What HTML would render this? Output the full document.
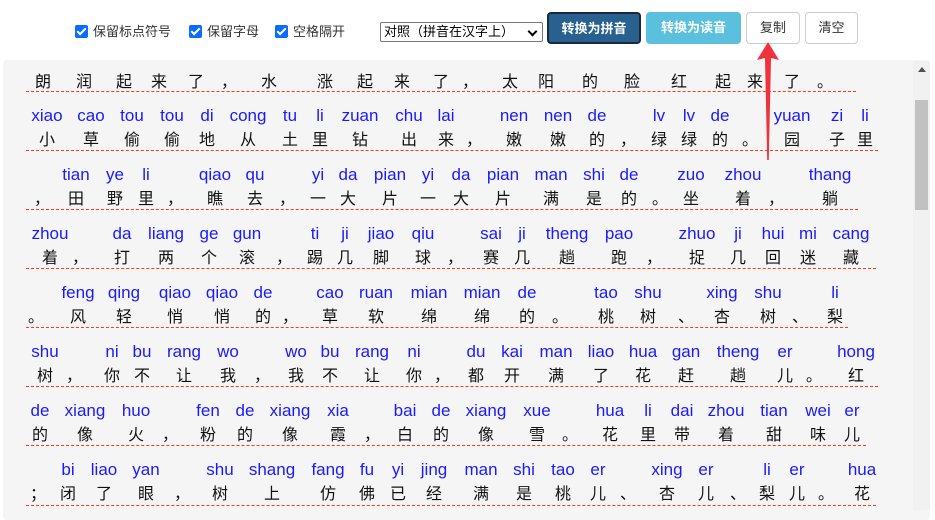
<!DOCTYPE html>
<html><head><meta charset="utf-8">
<style>
*{margin:0;padding:0;box-sizing:border-box}
body{width:935px;height:510px;overflow:hidden;background:#fff;font-family:"Liberation Sans","Noto Sans CJK SC",sans-serif;position:relative}
.cb{position:absolute;top:25px;width:13px;height:13px;background:#0a6cff;border-radius:2px}
.cb:after{content:"";position:absolute;left:4px;top:1px;width:3px;height:7px;border:solid #fff;border-width:0 2px 2px 0;transform:rotate(45deg)}
.lb{position:absolute;top:23px;font-size:13px;color:#333;line-height:18px}
.sel{position:absolute;left:380px;top:22px;width:163px;height:20px;border:1px solid #767676;border-radius:2px;font-size:13px;line-height:18px;padding-left:3px;color:#000;background:#fff}
.sel:after{content:"";position:absolute;right:6px;top:5px;width:5px;height:5px;border:solid #000;border-width:0 2px 2px 0;transform:rotate(45deg)}
.btn{position:absolute;top:12px;height:32px;border-radius:4px;font-size:13px;line-height:30px;text-align:center;border:1px solid #ccc;color:#333;background:#fff}
#box{position:absolute;left:3px;top:60px;width:927px;height:460px;background:#f5f5f5;border-radius:4px;overflow:hidden}
#sb{position:absolute;left:913px;top:61px;width:17px;height:449px;background:#f1f1f1}
#th{position:absolute;left:915px;top:100px;width:13px;height:110px;background:#c1c1c1}
#ar{position:absolute;left:918px;top:67px;width:0;height:0;border:4px solid transparent;border-bottom:5px solid #505050;border-top:0}
#c{position:absolute;left:0;top:2px;width:913px;height:508px;overflow:hidden}
.u{position:absolute;transform:translateX(-50%);text-align:center;white-space:nowrap}
.p{height:20px;line-height:20px;font-size:17px;color:#1a1aff}
.h{height:20px;line-height:20px;font-size:16px;color:#111;margin-top:5px}
.d{position:absolute;left:26px;height:0;border-top:1px dashed #ff3a10}
</style></head><body>
<div class="cb" style="left:75px"></div><div class="lb" style="left:93px">保留标点符号</div>
<div class="cb" style="left:189px"></div><div class="lb" style="left:207px">保留字母</div>
<div class="cb" style="left:275px"></div><div class="lb" style="left:293px">空格隔开</div>
<div class="sel">对照（拼音在汉字上）</div>
<div class="btn" style="left:547px;width:94px;background:#286090;color:#fff;border:2px solid #1b2a3a;font-weight:bold">转换为拼音</div>
<div class="btn" style="left:646px;width:95px;background:#5bc0de;color:#fff;border-color:#5bc0de;font-weight:bold">转换为读音</div>
<div class="btn" style="left:746px;width:54px">复制</div>
<div class="btn" style="left:805px;width:53px">清空</div>
<div id="box"></div>
<div id="sb"></div><div id="th"></div><div id="ar"></div>

<div id="c">
<div style="position:absolute;left:0;top:-2px;width:913px;height:510px">
<!-- line1 -->
<div class="u" style="left:43px;top:48px"><div class="p"></div><div class="h">朗</div></div>
<div class="u" style="left:84px;top:48px"><div class="p"></div><div class="h">润</div></div>
<div class="u" style="left:124px;top:48px"><div class="p"></div><div class="h">起</div></div>
<div class="u" style="left:159px;top:48px"><div class="p"></div><div class="h">来</div></div>
<div class="u" style="left:196px;top:48px"><div class="p"></div><div class="h">了</div></div>
<div class="u" style="left:229px;top:48px"><div class="p"></div><div class="h">，</div></div>
<div class="u" style="left:269px;top:48px"><div class="p"></div><div class="h">水</div></div>
<div class="u" style="left:325px;top:48px"><div class="p"></div><div class="h">涨</div></div>
<div class="u" style="left:365px;top:48px"><div class="p"></div><div class="h">起</div></div>
<div class="u" style="left:402px;top:48px"><div class="p"></div><div class="h">来</div></div>
<div class="u" style="left:441px;top:48px"><div class="p"></div><div class="h">了</div></div>
<div class="u" style="left:470px;top:48px"><div class="p"></div><div class="h">，</div></div>
<div class="u" style="left:510px;top:48px"><div class="p"></div><div class="h">太</div></div>
<div class="u" style="left:546px;top:48px"><div class="p"></div><div class="h">阳</div></div>
<div class="u" style="left:590px;top:48px"><div class="p"></div><div class="h">的</div></div>
<div class="u" style="left:632px;top:48px"><div class="p"></div><div class="h">脸</div></div>
<div class="u" style="left:679px;top:48px"><div class="p"></div><div class="h">红</div></div>
<div class="u" style="left:723px;top:48px"><div class="p"></div><div class="h">起</div></div>
<div class="u" style="left:755px;top:48px"><div class="p"></div><div class="h">来</div></div>
<div class="u" style="left:792px;top:48px"><div class="p"></div><div class="h">了</div></div>
<div class="u" style="left:825px;top:48px"><div class="p"></div><div class="h">。</div></div>
<div class="d" style="top:91px;width:830px"></div>
<!-- line2 -->
<div class="u" style="left:47px;top:106px"><div class="p">xiao</div><div class="h">小</div></div>
<div class="u" style="left:91px;top:106px"><div class="p">cao</div><div class="h">草</div></div>
<div class="u" style="left:132px;top:106px"><div class="p">tou</div><div class="h">偷</div></div>
<div class="u" style="left:172px;top:106px"><div class="p">tou</div><div class="h">偷</div></div>
<div class="u" style="left:207px;top:106px"><div class="p">di</div><div class="h">地</div></div>
<div class="u" style="left:248px;top:106px"><div class="p">cong</div><div class="h">从</div></div>
<div class="u" style="left:290px;top:106px"><div class="p">tu</div><div class="h">土</div></div>
<div class="u" style="left:320px;top:106px"><div class="p">li</div><div class="h">里</div></div>
<div class="u" style="left:360px;top:106px"><div class="p">zuan</div><div class="h">钻</div></div>
<div class="u" style="left:409px;top:106px"><div class="p">chu</div><div class="h">出</div></div>
<div class="u" style="left:446px;top:106px"><div class="p">lai</div><div class="h">来</div></div>
<div class="u" style="left:474px;top:106px"><div class="p"></div><div class="h">，</div></div>
<div class="u" style="left:514px;top:106px"><div class="p">nen</div><div class="h">嫩</div></div>
<div class="u" style="left:558px;top:106px"><div class="p">nen</div><div class="h">嫩</div></div>
<div class="u" style="left:597px;top:106px"><div class="p">de</div><div class="h">的</div></div>
<div class="u" style="left:628px;top:106px"><div class="p"></div><div class="h">，</div></div>
<div class="u" style="left:659px;top:106px"><div class="p">lv</div><div class="h">绿</div></div>
<div class="u" style="left:689px;top:106px"><div class="p">lv</div><div class="h">绿</div></div>
<div class="u" style="left:720px;top:106px"><div class="p">de</div><div class="h">的</div></div>
<div class="u" style="left:750px;top:106px"><div class="p"></div><div class="h">。</div></div>
<div class="u" style="left:792px;top:106px"><div class="p">yuan</div><div class="h">园</div></div>
<div class="u" style="left:837px;top:106px"><div class="p">zi</div><div class="h">子</div></div>
<div class="u" style="left:865px;top:106px"><div class="p">li</div><div class="h">里</div></div>
<div class="d" style="top:150px;width:852px"></div>
<!-- line3 -->
<div class="u" style="left:42px;top:165px"><div class="p"></div><div class="h">，</div></div>
<div class="u" style="left:76px;top:165px"><div class="p">tian</div><div class="h">田</div></div>
<div class="u" style="left:115px;top:165px"><div class="p">ye</div><div class="h">野</div></div>
<div class="u" style="left:146px;top:165px"><div class="p">li</div><div class="h">里</div></div>
<div class="u" style="left:175px;top:165px"><div class="p"></div><div class="h">，</div></div>
<div class="u" style="left:215px;top:165px"><div class="p">qiao</div><div class="h">瞧</div></div>
<div class="u" style="left:255px;top:165px"><div class="p">qu</div><div class="h">去</div></div>
<div class="u" style="left:287px;top:165px"><div class="p"></div><div class="h">，</div></div>
<div class="u" style="left:318px;top:165px"><div class="p">yi</div><div class="h">一</div></div>
<div class="u" style="left:348px;top:165px"><div class="p">da</div><div class="h">大</div></div>
<div class="u" style="left:390px;top:165px"><div class="p">pian</div><div class="h">片</div></div>
<div class="u" style="left:428px;top:165px"><div class="p">yi</div><div class="h">一</div></div>
<div class="u" style="left:461px;top:165px"><div class="p">da</div><div class="h">大</div></div>
<div class="u" style="left:503px;top:165px"><div class="p">pian</div><div class="h">片</div></div>
<div class="u" style="left:551px;top:165px"><div class="p">man</div><div class="h">满</div></div>
<div class="u" style="left:594px;top:165px"><div class="p">shi</div><div class="h">是</div></div>
<div class="u" style="left:629px;top:165px"><div class="p">de</div><div class="h">的</div></div>
<div class="u" style="left:660px;top:165px"><div class="p"></div><div class="h">。</div></div>
<div class="u" style="left:691px;top:165px"><div class="p">zuo</div><div class="h">坐</div></div>
<div class="u" style="left:743px;top:165px"><div class="p">zhou</div><div class="h">着</div></div>
<div class="u" style="left:776px;top:165px"><div class="p"></div><div class="h">，</div></div>
<div class="u" style="left:830px;top:165px"><div class="p">thang</div><div class="h">躺</div></div>
<div class="d" style="top:209px;width:832px"></div>
<!-- line4 -->
<div class="u" style="left:50px;top:224px"><div class="p">zhou</div><div class="h">着</div></div>
<div class="u" style="left:80px;top:224px"><div class="p"></div><div class="h">，</div></div>
<div class="u" style="left:122px;top:224px"><div class="p">da</div><div class="h">打</div></div>
<div class="u" style="left:166px;top:224px"><div class="p">liang</div><div class="h">两</div></div>
<div class="u" style="left:209px;top:224px"><div class="p">ge</div><div class="h">个</div></div>
<div class="u" style="left:247px;top:224px"><div class="p">gun</div><div class="h">滚</div></div>
<div class="u" style="left:284px;top:224px"><div class="p"></div><div class="h">，</div></div>
<div class="u" style="left:315px;top:224px"><div class="p">ti</div><div class="h">踢</div></div>
<div class="u" style="left:345px;top:224px"><div class="p">ji</div><div class="h">几</div></div>
<div class="u" style="left:381px;top:224px"><div class="p">jiao</div><div class="h">脚</div></div>
<div class="u" style="left:423px;top:224px"><div class="p">qiu</div><div class="h">球</div></div>
<div class="u" style="left:455px;top:224px"><div class="p"></div><div class="h">，</div></div>
<div class="u" style="left:491px;top:224px"><div class="p">sai</div><div class="h">赛</div></div>
<div class="u" style="left:522px;top:224px"><div class="p">ji</div><div class="h">几</div></div>
<div class="u" style="left:567px;top:224px"><div class="p">theng</div><div class="h">趟</div></div>
<div class="u" style="left:619px;top:224px"><div class="p">pao</div><div class="h">跑</div></div>
<div class="u" style="left:654px;top:224px"><div class="p"></div><div class="h">，</div></div>
<div class="u" style="left:697px;top:224px"><div class="p">zhuo</div><div class="h">捉</div></div>
<div class="u" style="left:738px;top:224px"><div class="p">ji</div><div class="h">几</div></div>
<div class="u" style="left:773px;top:224px"><div class="p">hui</div><div class="h">回</div></div>
<div class="u" style="left:808px;top:224px"><div class="p">mi</div><div class="h">迷</div></div>
<div class="u" style="left:851px;top:224px"><div class="p">cang</div><div class="h">藏</div></div>
<div class="d" style="top:268px;width:850px"></div>
<!-- line5 -->
<div class="u" style="left:36px;top:283px"><div class="p"></div><div class="h">。</div></div>
<div class="u" style="left:78px;top:283px"><div class="p">feng</div><div class="h">风</div></div>
<div class="u" style="left:124px;top:283px"><div class="p">qing</div><div class="h">轻</div></div>
<div class="u" style="left:175px;top:283px"><div class="p">qiao</div><div class="h">悄</div></div>
<div class="u" style="left:222px;top:283px"><div class="p">qiao</div><div class="h">悄</div></div>
<div class="u" style="left:263px;top:283px"><div class="p">de</div><div class="h">的</div></div>
<div class="u" style="left:290px;top:283px"><div class="p"></div><div class="h">，</div></div>
<div class="u" style="left:330px;top:283px"><div class="p">cao</div><div class="h">草</div></div>
<div class="u" style="left:376px;top:283px"><div class="p">ruan</div><div class="h">软</div></div>
<div class="u" style="left:429px;top:283px"><div class="p">mian</div><div class="h">绵</div></div>
<div class="u" style="left:482px;top:283px"><div class="p">mian</div><div class="h">绵</div></div>
<div class="u" style="left:527px;top:283px"><div class="p">de</div><div class="h">的</div></div>
<div class="u" style="left:560px;top:283px"><div class="p"></div><div class="h">。</div></div>
<div class="u" style="left:606px;top:283px"><div class="p">tao</div><div class="h">桃</div></div>
<div class="u" style="left:648px;top:283px"><div class="p">shu</div><div class="h">树</div></div>
<div class="u" style="left:686px;top:283px"><div class="p"></div><div class="h">、</div></div>
<div class="u" style="left:722px;top:283px"><div class="p">xing</div><div class="h">杏</div></div>
<div class="u" style="left:768px;top:283px"><div class="p">shu</div><div class="h">树</div></div>
<div class="u" style="left:800px;top:283px"><div class="p"></div><div class="h">、</div></div>
<div class="u" style="left:835px;top:283px"><div class="p">li</div><div class="h">梨</div></div>
<div class="d" style="top:327px;width:822px"></div>
<!-- line6 -->
<div class="u" style="left:45px;top:342px"><div class="p">shu</div><div class="h">树</div></div>
<div class="u" style="left:74px;top:342px"><div class="p"></div><div class="h">，</div></div>
<div class="u" style="left:112px;top:342px"><div class="p">ni</div><div class="h">你</div></div>
<div class="u" style="left:142px;top:342px"><div class="p">bu</div><div class="h">不</div></div>
<div class="u" style="left:184px;top:342px"><div class="p">rang</div><div class="h">让</div></div>
<div class="u" style="left:228px;top:342px"><div class="p">wo</div><div class="h">我</div></div>
<div class="u" style="left:262px;top:342px"><div class="p"></div><div class="h">，</div></div>
<div class="u" style="left:296px;top:342px"><div class="p">wo</div><div class="h">我</div></div>
<div class="u" style="left:330px;top:342px"><div class="p">bu</div><div class="h">不</div></div>
<div class="u" style="left:372px;top:342px"><div class="p">rang</div><div class="h">让</div></div>
<div class="u" style="left:414px;top:342px"><div class="p">ni</div><div class="h">你</div></div>
<div class="u" style="left:442px;top:342px"><div class="p"></div><div class="h">，</div></div>
<div class="u" style="left:476px;top:342px"><div class="p">du</div><div class="h">都</div></div>
<div class="u" style="left:512px;top:342px"><div class="p">kai</div><div class="h">开</div></div>
<div class="u" style="left:556px;top:342px"><div class="p">man</div><div class="h">满</div></div>
<div class="u" style="left:601px;top:342px"><div class="p">liao</div><div class="h">了</div></div>
<div class="u" style="left:643px;top:342px"><div class="p">hua</div><div class="h">花</div></div>
<div class="u" style="left:686px;top:342px"><div class="p">gan</div><div class="h">赶</div></div>
<div class="u" style="left:738px;top:342px"><div class="p">theng</div><div class="h">趟</div></div>
<div class="u" style="left:785px;top:342px"><div class="p">er</div><div class="h">儿</div></div>
<div class="u" style="left:814px;top:342px"><div class="p"></div><div class="h">。</div></div>
<div class="u" style="left:856px;top:342px"><div class="p">hong</div><div class="h">红</div></div>
<div class="d" style="top:386px;width:852px"></div>
<!-- line7 -->
<div class="u" style="left:40px;top:401px"><div class="p">de</div><div class="h">的</div></div>
<div class="u" style="left:85px;top:401px"><div class="p">xiang</div><div class="h">像</div></div>
<div class="u" style="left:136px;top:401px"><div class="p">huo</div><div class="h">火</div></div>
<div class="u" style="left:170px;top:401px"><div class="p"></div><div class="h">，</div></div>
<div class="u" style="left:208px;top:401px"><div class="p">fen</div><div class="h">粉</div></div>
<div class="u" style="left:245px;top:401px"><div class="p">de</div><div class="h">的</div></div>
<div class="u" style="left:290px;top:401px"><div class="p">xiang</div><div class="h">像</div></div>
<div class="u" style="left:338px;top:401px"><div class="p">xia</div><div class="h">霞</div></div>
<div class="u" style="left:372px;top:401px"><div class="p"></div><div class="h">，</div></div>
<div class="u" style="left:405px;top:401px"><div class="p">bai</div><div class="h">白</div></div>
<div class="u" style="left:441px;top:401px"><div class="p">de</div><div class="h">的</div></div>
<div class="u" style="left:486px;top:401px"><div class="p">xiang</div><div class="h">像</div></div>
<div class="u" style="left:537px;top:401px"><div class="p">xue</div><div class="h">雪</div></div>
<div class="u" style="left:570px;top:401px"><div class="p"></div><div class="h">。</div></div>
<div class="u" style="left:610px;top:401px"><div class="p">hua</div><div class="h">花</div></div>
<div class="u" style="left:648px;top:401px"><div class="p">li</div><div class="h">里</div></div>
<div class="u" style="left:682px;top:401px"><div class="p">dai</div><div class="h">带</div></div>
<div class="u" style="left:726px;top:401px"><div class="p">zhou</div><div class="h">着</div></div>
<div class="u" style="left:774px;top:401px"><div class="p">tian</div><div class="h">甜</div></div>
<div class="u" style="left:818px;top:401px"><div class="p">wei</div><div class="h">味</div></div>
<div class="u" style="left:852px;top:401px"><div class="p">er</div><div class="h">儿</div></div>
<div class="d" style="top:445px;width:840px"></div>
<!-- line8 -->
<div class="u" style="left:38px;top:460px"><div class="p"></div><div class="h">；</div></div>
<div class="u" style="left:68px;top:460px"><div class="p">bi</div><div class="h">闭</div></div>
<div class="u" style="left:104px;top:460px"><div class="p">liao</div><div class="h">了</div></div>
<div class="u" style="left:146px;top:460px"><div class="p">yan</div><div class="h">眼</div></div>
<div class="u" style="left:182px;top:460px"><div class="p"></div><div class="h">，</div></div>
<div class="u" style="left:220px;top:460px"><div class="p">shu</div><div class="h">树</div></div>
<div class="u" style="left:272px;top:460px"><div class="p">shang</div><div class="h">上</div></div>
<div class="u" style="left:328px;top:460px"><div class="p">fang</div><div class="h">仿</div></div>
<div class="u" style="left:367px;top:460px"><div class="p">fu</div><div class="h">佛</div></div>
<div class="u" style="left:398px;top:460px"><div class="p">yi</div><div class="h">已</div></div>
<div class="u" style="left:434px;top:460px"><div class="p">jing</div><div class="h">经</div></div>
<div class="u" style="left:481px;top:460px"><div class="p">man</div><div class="h">满</div></div>
<div class="u" style="left:524px;top:460px"><div class="p">shi</div><div class="h">是</div></div>
<div class="u" style="left:563px;top:460px"><div class="p">tao</div><div class="h">桃</div></div>
<div class="u" style="left:598px;top:460px"><div class="p">er</div><div class="h">儿</div></div>
<div class="u" style="left:628px;top:460px"><div class="p"></div><div class="h">、</div></div>
<div class="u" style="left:667px;top:460px"><div class="p">xing</div><div class="h">杏</div></div>
<div class="u" style="left:706px;top:460px"><div class="p">er</div><div class="h">儿</div></div>
<div class="u" style="left:738px;top:460px"><div class="p"></div><div class="h">、</div></div>
<div class="u" style="left:767px;top:460px"><div class="p">li</div><div class="h">梨</div></div>
<div class="u" style="left:797px;top:460px"><div class="p">er</div><div class="h">儿</div></div>
<div class="u" style="left:826px;top:460px"><div class="p"></div><div class="h">。</div></div>
<div class="u" style="left:862px;top:460px"><div class="p">hua</div><div class="h">花</div></div>
<div class="d" style="top:505px;width:850px"></div>
</div>
</div>

<svg style="position:absolute;left:755px;top:40px" width="26" height="122" viewBox="0 0 26 122">
<path d="M13 2 L24 20 L16 18 L13.8 120 L12.2 120 L10 18 L2 20 Z" fill="#f0323c"/>
</svg>
</body></html>
